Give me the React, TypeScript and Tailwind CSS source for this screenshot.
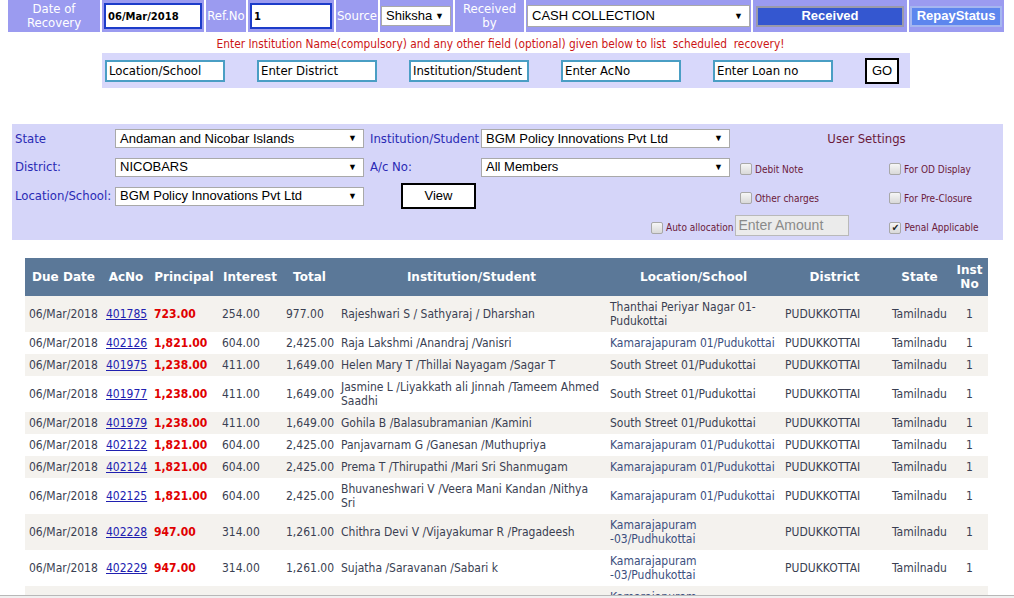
import React from "react";

const tah = "[font-family:'DejaVu_Sans_Condensed','DejaVu_Sans',sans-serif]";
const ver = "[font-family:'DejaVu_Sans',Verdana,sans-serif]";
const ari = "[font-family:'Liberation_Sans',Arial,sans-serif]";

function Sel({ w, h, text }: { w: string; h: string; text: string }) {
  return (
    <div
      className={`${w} ${h} bg-white border border-[#a9a9a9] flex items-center justify-between pl-[4px] pr-[6px] text-[13px] text-black ${ari}`}
    >
      <span className="whitespace-nowrap">{text}</span>
      <span className="text-[9px] leading-none">▼</span>
    </div>
  );
}

function Cb({ label, checked }: { label: string; checked?: boolean }) {
  return (
    <div className="flex items-center gap-[3px] mt-[4px]">
      <span className="w-[12px] h-[12px] border border-[#a8a8a8] rounded-[2px] bg-gradient-to-b from-[#f6f6f6] to-[#d9d9d9] flex items-center justify-center text-[10px] leading-none text-[#222]">
        {checked ? "✔" : ""}
      </span>
      <span className={`text-[10px] text-[#6b1a3a] whitespace-nowrap ${tah}`}>{label}</span>
    </div>
  );
}

type Row = {
  ac: string;
  p: string;
  i: string;
  t: string;
  inst: React.ReactNode;
  loc: React.ReactNode;
  blue?: boolean;
  partial?: boolean;
};

const rows: Row[] = [
  { ac: "401785", p: "723.00", i: "254.00", t: "977.00", inst: "Rajeshwari S / Sathyaraj / Dharshan", loc: <>Thanthai Periyar Nagar 01-<br />Pudukottai</> },
  { ac: "402126", p: "1,821.00", i: "604.00", t: "2,425.00", inst: "Raja Lakshmi /Anandraj /Vanisri", loc: "Kamarajapuram 01/Pudukottai", blue: true },
  { ac: "401975", p: "1,238.00", i: "411.00", t: "1,649.00", inst: "Helen Mary T /Thillai Nayagam /Sagar T", loc: "South Street 01/Pudukottai" },
  { ac: "401977", p: "1,238.00", i: "411.00", t: "1,649.00", inst: <>Jasmine L /Liyakkath ali Jinnah /Tameem Ahmed<br />Saadhi</>, loc: "South Street 01/Pudukottai" },
  { ac: "401979", p: "1,238.00", i: "411.00", t: "1,649.00", inst: "Gohila B /Balasubramanian /Kamini", loc: "South Street 01/Pudukottai" },
  { ac: "402122", p: "1,821.00", i: "604.00", t: "2,425.00", inst: "Panjavarnam G /Ganesan /Muthupriya", loc: "Kamarajapuram 01/Pudukottai", blue: true },
  { ac: "402124", p: "1,821.00", i: "604.00", t: "2,425.00", inst: "Prema T /Thirupathi /Mari Sri Shanmugam", loc: "Kamarajapuram 01/Pudukottai", blue: true },
  { ac: "402125", p: "1,821.00", i: "604.00", t: "2,425.00", inst: <>Bhuvaneshwari V /Veera Mani Kandan /Nithya<br />Sri</>, loc: "Kamarajapuram 01/Pudukottai", blue: true },
  { ac: "402228", p: "947.00", i: "314.00", t: "1,261.00", inst: "Chithra Devi V /Vijayakumar R /Pragadeesh", loc: <>Kamarajapuram<br />-03/Pudhukottai</>, blue: true },
  { ac: "402229", p: "947.00", i: "314.00", t: "1,261.00", inst: "Sujatha /Saravanan /Sabari k", loc: <>Kamarajapuram<br />-03/Pudhukottai</>, blue: true },
  { ac: "402230", p: "", i: "", t: "", inst: "", loc: <>Kamarajapuram<br />-03/Pudhukottai</>, blue: true, partial: true },
];

export default function App() {
  const labelCell = `bg-[#9b9bf0] text-white text-[13px] leading-[14px] flex items-center justify-center text-center ${tah}`;
  return (
    <div className="relative w-[1014px] h-[598px] overflow-hidden bg-white">
      {/* Top bar */}
      <div className="flex h-[32px] ml-[8px] gap-[2px]">
        <div className={`w-[92px] ${labelCell}`}>Date of<br />Recovery</div>
        <div className="w-[102px] bg-[#9b9bf0] flex items-center px-[2px]">
          <div className={`h-[26px] w-full border-2 border-[#1c3cc9] bg-white flex items-center pl-[2px] text-[10px] font-bold text-black ${ver}`}>06/Mar/2018</div>
        </div>
        <div className={`w-[40px] ${labelCell}`}>Ref.No</div>
        <div className="w-[86px] bg-[#9b9bf0] flex items-center px-[2px]">
          <div className={`h-[26px] w-full border-2 border-[#1c3cc9] bg-white flex items-center pl-[2px] text-[10px] font-bold text-black ${ver}`}>1</div>
        </div>
        <div className={`w-[42px] ${labelCell}`}>Source</div>
        <div className="w-[73px] bg-[#9b9bf0] flex items-center px-[1px]">
          <Sel w="w-[70px]" h="h-[20px]" text="Shiksha" />
        </div>
        <div className={`w-[69px] ${labelCell}`}>Received<br />by</div>
        <div className="w-[225px] bg-[#9b9bf0] flex items-center px-[1px]">
          <Sel w="w-[223px]" h="h-[22px]" text="CASH COLLECTION" />
        </div>
        <div className="w-[154px] bg-[#9b9bf0] flex items-center px-[3px]">
          <div className={`w-[149px] h-[21px] bg-[#3457d0] border-2 border-[#9a9aaa] text-white font-bold text-[13px] flex items-center justify-center ${ari}`}>Received</div>
        </div>
        <div className="w-[95px] bg-[#9b9bf0] flex items-center px-[1px]">
          <div className={`w-[92px] h-[21px] bg-[#5d86ee] border-2 border-[#a5b6f0] text-white font-bold text-[13px] flex items-center justify-center ${ari}`}>RepayStatus</div>
        </div>
      </div>

      {/* Message */}
      <div className={`w-[1001px] h-[21px] pt-[4px] text-center text-[11.8px] leading-[16px] text-[#cc1515] whitespace-pre ${tah}`}>
        {"Enter Institution Name(compulsory) and any other field (optional) given below to list  scheduled  recovery!"}
      </div>

      {/* Search row */}
      <div className={`ml-[102px] w-[808px] h-[35px] bg-[#d8d8fb] flex items-center pl-[3px] gap-[32px] ${tah}`}>
        {["Location/School", "Enter District", "Institution/Student", "Enter AcNo", "Enter Loan no"].map((t) => (
          <div key={t} className="w-[120px] h-[22px] border-2 border-[#4a9ec4] bg-white flex items-center pl-[2px] text-[13px] text-black whitespace-nowrap">
            {t}
          </div>
        ))}
        <div className={`w-[34px] h-[26px] border-2 border-black bg-white flex items-center justify-center text-[13px] text-black ${ari}`}>GO</div>
      </div>

      {/* Settings panel */}
      <div className={`mt-[36px] ml-[12px] w-[991px] h-[116px] bg-[#d5d5f9] pl-[3px] text-[13px] ${tah}`}>
        <div className="flex items-center h-[29px]">
          <div className="w-[100px] text-[#2a2ab5]">State</div>
          <Sel w="w-[249px]" h="h-[19px]" text="Andaman and Nicobar Islands" />
          <div className="w-[111px] ml-[6px] text-[#2a2ab5]">Institution/Student</div>
          <Sel w="w-[249px]" h="h-[19px]" text="BGM Policy Innovations Pvt Ltd" />
          <div className="flex-1 text-center text-[#6b1a3a]">User Settings</div>
        </div>
        <div className="flex items-center h-[28px]">
          <div className="w-[100px] text-[#2a2ab5]">District:</div>
          <Sel w="w-[249px]" h="h-[19px]" text="NICOBARS" />
          <div className="w-[111px] ml-[6px] text-[#2a2ab5]">A/c No:</div>
          <Sel w="w-[249px]" h="h-[19px]" text="All Members" />
          <div className="w-[149px] ml-[10px]"><Cb label="Debit Note" /></div>
          <div><Cb label="For OD Display" /></div>
        </div>
        <div className="flex items-center h-[30px]">
          <div className="w-[100px] text-[#2a2ab5] whitespace-nowrap">Location/School:</div>
          <Sel w="w-[249px]" h="h-[19px]" text="BGM Policy Innovations Pvt Ltd" />
          <div className={`ml-[37px] w-[75px] h-[26px] border-2 border-black bg-white flex items-center justify-center text-[13px] text-black ${ari}`}>View</div>
          <div className="w-[149px] ml-[264px]"><Cb label="Other charges" /></div>
          <div><Cb label="For Pre-Closure" /></div>
        </div>
        <div className="flex items-center h-[29px]">
          <div className="ml-[636px]"><Cb label="Auto allocation" /></div>
          <div className={`ml-[2px] w-[114px] h-[21px] border border-[#b9b9b9] bg-[#ebebeb] flex items-center pl-[2px] text-[14px] text-[#8a8a8a] ${ari}`}>Enter Amount</div>
          <div className="ml-[40px]"><Cb label="Penal Applicable" checked /></div>
        </div>
      </div>

      {/* Table */}
      <table className={`mt-[18px] ml-[25px] w-[963px] table-fixed border-collapse text-[12px] ${tah}`}>
        <colgroup>
          <col className="w-[77px]" />
          <col className="w-[48px]" />
          <col className="w-[68px]" />
          <col className="w-[64px]" />
          <col className="w-[55px]" />
          <col className="w-[269px]" />
          <col className="w-[175px]" />
          <col className="w-[107px]" />
          <col className="w-[63px]" />
          <col className="w-[37px]" />
        </colgroup>
        <thead>
          <tr className={`h-[38px] bg-[#5b7898] text-white text-[12px] leading-[14px] font-bold ${ver}`}>
            <th className="font-bold whitespace-nowrap">Due Date</th>
            <th className="font-bold">AcNo</th>
            <th className="font-bold">Principal</th>
            <th className="font-bold">Interest</th>
            <th className="font-bold">Total</th>
            <th className="font-bold">Institution/Student</th>
            <th className="font-bold">Location/School</th>
            <th className="font-bold">District</th>
            <th className="font-bold">State</th>
            <th className="font-bold">Inst<br />No</th>
          </tr>
        </thead>
        <tbody>
          {rows.map((r, idx) => (
            <tr key={r.ac} className={`${idx % 2 === 0 ? "bg-[#f4f2ee]" : "bg-white"} text-[#3a3f52] leading-[14px]`}>
              <td className="px-[4px] py-[4px] whitespace-nowrap">{r.partial ? "" : "06/Mar/2018"}</td>
              <td className="px-[4px] py-[4px]">{r.partial ? "" : <span className="text-[#2020b0] underline">{r.ac}</span>}</td>
              <td className="px-[4px] py-[4px] whitespace-nowrap text-[#e00000] font-bold text-[12px]">{r.p}</td>
              <td className="px-[4px] py-[4px] whitespace-nowrap">{r.i}</td>
              <td className="px-[4px] py-[4px] whitespace-nowrap">{r.t}</td>
              <td className="px-[4px] py-[4px] whitespace-nowrap">{r.inst}</td>
              <td className={`px-[4px] py-[4px] whitespace-nowrap ${r.blue ? "text-[#3c4f7e]" : ""}`}>{r.loc}</td>
              <td className="px-[4px] py-[4px] whitespace-nowrap">{r.partial ? "" : "PUDUKKOTTAI"}</td>
              <td className="px-[4px] py-[4px] whitespace-nowrap">{r.partial ? "" : "Tamilnadu"}</td>
              <td className="px-[4px] py-[4px] text-center">{r.partial ? "" : "1"}</td>
            </tr>
          ))}
        </tbody>
      </table>

      <div className="absolute left-0 bottom-0 w-full h-[3px] border-t border-[#b8b8b8] bg-[#f0f0f0]" />
    </div>
  );
}
